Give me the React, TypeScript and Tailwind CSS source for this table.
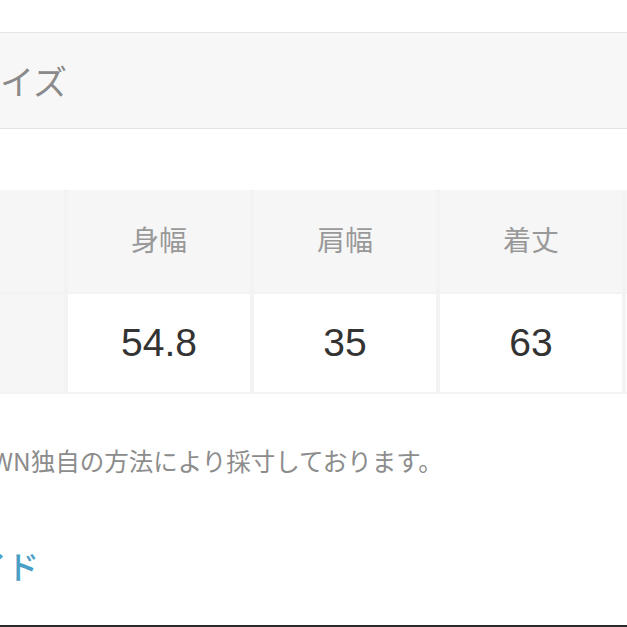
import React from 'react';

const jp = '"Noto Sans CJK JP", "Noto Sans", sans-serif';
const num = '"Liberation Sans", "Noto Sans CJK JP", sans-serif';

const columns = [
  { label: '身幅', value: '54.8' },
  { label: '肩幅', value: '35' },
  { label: '着丈', value: '63' },
  { label: '袖丈', value: '22' },
];

// text whose beginning runs off the left edge; `cut` is where the hidden part ends
const Clipped: React.FC<{ hidden: string; shown: string; cut: number }> = ({ hidden, shown, cut }) => (
  <div className="flex whitespace-nowrap">
    <div className="flex justify-end shrink-0" style={{ width: cut }}>
      <span>{hidden}</span>
    </div>
    <span>{shown}</span>
  </div>
);

const App: React.FC = () => {
  return (
    <div className="w-[627px] h-[627px] bg-white overflow-hidden flex flex-col" style={{ fontFamily: jp }}>
      <div className="h-[32px] shrink-0" />

      <div className="h-[97px] shrink-0 bg-[#f7f7f7] border-y border-[#e4e4e4] flex items-center text-[34px] text-[#8a8a8a]">
        <Clipped hidden="サ" shown="イズ" cut={0} />
      </div>

      <div className="h-[61px] shrink-0" />

      <div className="shrink-0 bg-[#f3f3f3] pb-[2px]">
        <div className="grid grid-cols-[64px_182px_182px_182px_182px] gap-x-[4px] gap-y-[2px]">
          <div className="h-[102px] bg-[#f6f6f6]" />
          {columns.map((c) => (
            <div key={c.label} className="h-[102px] bg-[#f6f6f6] flex items-center justify-center text-[28px] text-[#999] pb-[4px]">
              {c.label}
            </div>
          ))}
          <div className="h-[98px] bg-[#f6f6f6]" />
          {columns.map((c) => (
            <div
              key={c.label + '-v'}
              className="h-[98px] bg-white flex items-center justify-center text-[39px] text-[#333]"
              style={{ fontFamily: num }}
            >
              {c.value}
            </div>
          ))}
        </div>
      </div>

      <div className="h-[50px] shrink-0" />

      <div className="h-[34px] shrink-0 flex items-center text-[24.5px] text-[#8c8c8c]">
        <Clipped hidden="※サイズはZOZOTOW" shown="N独自の方法により採寸しております。" cut={13} />
      </div>

      <div className="h-[66px] shrink-0" />

      <div className="h-[42px] shrink-0 flex items-center text-[32px] font-medium text-[#4a9fc6]">
        <Clipped hidden="サイズガイ" shown="ド" cut={7} />
      </div>

      <div className="flex-1" />
      <div className="h-[2px] shrink-0 bg-[#2a2a2a]" />
    </div>
  );
};

export default App;
